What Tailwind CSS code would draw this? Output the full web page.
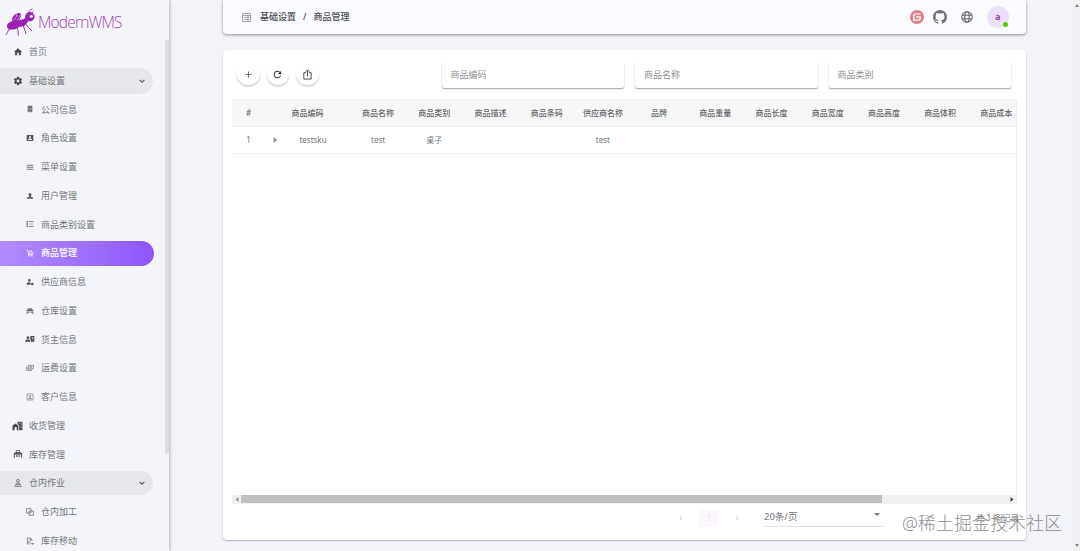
<!DOCTYPE html>
<html lang="zh-CN">
<head>
    <meta charset="UTF-8" />
    <meta name="viewport" content="width=device-width, initial-scale=1" />
    <title>ModernWMS</title>
    <script src="https://cdn.jsdelivr.net/npm/@tailwindcss/browser@4"></script>
</head>
<body class="relative flex w-[1080px] h-[551px] overflow-hidden bg-[#f3f4f9] font-['Noto_Sans','Noto_Sans_CJK_SC',sans-serif] text-[9px] text-[#75767b]">
    <!-- Sidebar -->
    <aside class="flex w-[169px] shrink-0 bg-[#f4f5fa] shadow-[1px_0_3px_rgba(0,0,0,0.25)]">
        <div class="w-[165px]">
            <div class="flex h-[37.5px] items-start pt-[7px] pl-[5px]">
                <svg class="h-[30px] w-[31px]" viewBox="0 0 31 30" fill="#9a22b2">
                    <path d="M2 19c0-3 4-5 8-5l5-1 4-1 3-3 1 6-4 4-5 1-3 2c-4 1-9 1-9-3z" />
                    <path d="M7.500 14.500C6 11 9 7.500 12 6.500s4 0 4 1.500-1 5-3 6-4 1-5.500.5z" />
                    <path d="M8.500 13c2-1.500 3-3 3.500-6M12 13c1.500-1 2.500-3 3-5" fill="none" stroke="#f4f5fa" stroke-width=".6" />
                    <circle cx="24.800" cy="9.800" r="4.700" />
                    <circle cx="26.300" cy="9.300" r="1.500" fill="#f4f5fa" />
                    <path d="M24 6c0-2 1-3.500 3.500-4M26.500 6l2-1.500M5 21 3 24l-2 4M12 20.500l1 3 .3 5M18 18l1.500 4 1.500 5M20.500 16.500l3 4 3.500 3.500" fill="none" stroke="#9a22b2" stroke-width=".9" />
                </svg>
                <svg class="h-[24px] w-[90px] overflow-visible" viewBox="0 0 90 24">
                    <text x="2" y="20.800" textLength="84.500" font-family="Open Sans, sans-serif" font-weight="300" font-size="15.500" fill="#a044b4">ModernWMS</text>
                </svg>
            </div>
            <nav>
                <a class="flex h-[28.75px] items-center pl-[13px]">
                    <svg class="mr-[6px] size-[10px]" viewBox="0 0 24 24" fill="#4a4b50"><path d="M10 20v-6h4v6h5v-8h3L12 3 2 12h3v8h5z" /></svg>
                    首页
                </a>
                <div class="flex h-[28.75px] items-center">
                    <a class="flex h-[26px] w-[153px] items-center rounded-r-full bg-[#e7e8eb] pl-[13px]">
                        <svg class="mr-[6px] size-[10px]" viewBox="0 0 24 24" fill="#4a4b50"><path d="M12 15.500A3.500 3.500 0 0 1 8.500 12 3.500 3.500 0 0 1 12 8.500a3.500 3.500 0 0 1 3.500 3.500 3.500 3.500 0 0 1-3.500 3.500m7.430-2.530c.04-.32.07-.64.07-.97s-.03-.66-.07-1l2.110-1.630c.19-.15.24-.42.12-.64l-2-3.460c-.12-.22-.39-.31-.61-.22l-2.490 1c-.52-.39-1.060-.73-1.690-.98l-.37-2.650A.506.506 0 0 0 14 2h-4c-.25 0-.46.18-.5.42l-.37 2.650c-.63.25-1.170.59-1.690.98l-2.490-1c-.22-.09-.49 0-.61.22l-2 3.460c-.13.22-.07.49.12.64L4.570 11c-.04.34-.07.67-.07 1s.03.65.07.97l-2.110 1.660c-.19.15-.25.42-.12.64l2 3.460c.12.22.39.3.61.22l2.490-1.010c.52.4 1.060.74 1.690.99l.37 2.650c.04.24.25.42.5.42h4c.25 0 .46-.18.5-.42l.37-2.650c.63-.26 1.170-.59 1.690-.99l2.490 1.010c.22.08.49 0 .61-.22l2-3.460c.12-.22.07-.49-.12-.64z" /></svg>
                        基础设置
                        <svg class="ml-auto mr-[6px] size-[10px]" viewBox="0 0 24 24" fill="#55565a"><path d="M7.410 8.580 12 13.170l4.590-4.590L18.500 10.500l-6.500 6.500-6.500-6.500z" /></svg>
                    </a>
                </div>
                <a class="flex h-[28.75px] items-center pl-[26px]">
                    <svg class="mr-[7px] size-[8px]" viewBox="0 0 24 24" fill="#66676b"><path d="M5 2v20h5v-3h4v3h5V2zm3 3h2v2H8zm6 0h2v2h-2zM8 9h2v2H8zm6 0h2v2h-2zm-6 4h2v2H8zm6 0h2v2h-2z" /></svg>
                    公司信息
                </a>
                <a class="flex h-[28.75px] items-center pl-[26px]">
                    <svg class="mr-[7px] size-[8px]" viewBox="0 0 24 24" fill="#55565a"><path d="M2 3v18h20V3zm10 3a3 3 0 1 1 0 6 3 3 0 0 1 0-6m6 12H6v-1.500c0-2 4-3 6-3s6 1 6 3z" /></svg>
                    角色设置
                </a>
                <a class="flex h-[28.75px] items-center pl-[26px]">
                    <svg class="mr-[7px] size-[8px]" viewBox="0 0 24 24" fill="#77787c"><path d="M2 5h20v3H2zm0 6h20v3H2zm0 6h20v3H2z" /></svg>
                    菜单设置
                </a>
                <a class="flex h-[28.75px] items-center pl-[26px]">
                    <svg class="mr-[7px] size-[8px]" viewBox="0 0 24 24" fill="#55565a"><path d="M12 3a4.500 4.500 0 0 1 4 6.500C15.300 11 14 12 14 14h1c3 .5 6 2 6 4v2H3v-2c0-2 3-3.500 6-4h1c0-2-1.300-3-2-4.500A4.500 4.500 0 0 1 12 3z" /></svg>
                    用户管理
                </a>
                <a class="flex h-[28.75px] items-center pl-[26px]">
                    <svg class="mr-[7px] size-[8px]" viewBox="0 0 24 24" fill="#66676b"><path d="M1 3h5v4H1zm8 1h14v2H9zM1 10h5v4H1zm8 1h14v2H9zM1 17h5v4H1zm8 1h14v2H9z" /></svg>
                    商品类别设置
                </a>
                <div class="flex h-[28.75px] items-center">
                    <a class="flex h-[25px] w-[154px] items-center rounded-r-full bg-linear-to-r from-[#b18cfd] to-[#8f55fd] pl-[26px] font-medium text-white">
                        <svg class="mr-[7px] size-[8px]" viewBox="0 0 24 24" fill="none" stroke="#fff" stroke-width="2.400"><path d="M1 3h4l4 12h10l3-7M10 4l8 7M18 4l-8 7M8 15l-1 3h13" /><circle cx="8" cy="21" r="1" /><circle cx="18" cy="21" r="1" /></svg>
                        商品管理
                    </a>
                </div>
                <a class="flex h-[28.75px] items-center pl-[26px]">
                    <svg class="mr-[7px] size-[8px]" viewBox="0 0 24 24" fill="#55565a"><path d="M10 3a4 4 0 1 1 0 8 4 4 0 0 1 0-8M2 20v-3c0-3 4-4 8-4l4 .5c-1 2-1 4 0 6.500z" /><circle cx="19" cy="18" r="4" /></svg>
                    供应商信息
                </a>
                <a class="flex h-[28.75px] items-center pl-[26px]">
                    <svg class="mr-[7px] size-[8px]" viewBox="0 0 24 24" fill="#66676b"><path d="M7 3h10v3l5 3v4H2V9l5-3zm2 2v2h6V5zM2 14h3v7H2zm17 0h3v7h-3zM7 14h2v4H7zm4 0h2v4h-2zm4 0h2v4h-2z" /></svg>
                    仓库设置
                </a>
                <a class="flex h-[28.75px] items-center pl-[26px]">
                    <svg class="mr-[7px] size-[8px] overflow-visible" viewBox="0 0 24 24" fill="#4a4b50"><circle cx="6" cy="8" r="4" /><path d="M-2 20v-3c0-5 15-5 15 0v3zM13 3h12v17H15v-4c0-1-1-2-2-3zm6 3v2h3V6zm0 4v2h3v-2zm0 4v2h3v-2z" /></svg>
                    货主信息
                </a>
                <a class="flex h-[28.75px] items-center pl-[26px]">
                    <svg class="mr-[7px] size-[8px]" viewBox="0 0 24 24" fill="none" stroke="#66676b" stroke-width="2.200"><path d="M7 4h16l-2 11H6zM2 8v11h16" /><circle cx="14" cy="9.500" r="2.500" /></svg>
                    运费设置
                </a>
                <a class="flex h-[28.75px] items-center pl-[26px]">
                    <svg class="mr-[7px] size-[8px]" viewBox="0 0 24 24" fill="none" stroke="#77787c" stroke-width="2"><path d="M3 3h18v18H3zM7 17c1-4 9-4 10 0z" /><circle cx="12" cy="9" r="2.500" /></svg>
                    客户信息
                </a>
                <a class="flex h-[28.75px] items-center pl-[12px]">
                    <svg class="mr-[6px] h-[10px] w-[11px]" viewBox="0 0 26 24" fill="#4a4b50"><path d="M1 11l7-5 7 5v11h-4v-7H6v7H1zM13 2h12v20h-8V10l-4-3zm4 2v2h2V4zm4 0v2h2V4zm0 5v2h2V9zm0 5v2h2v-2z" /></svg>
                    收货管理
                </a>
                <a class="flex h-[28.75px] items-center pl-[13px]">
                    <svg class="mr-[6px] size-[10px]" viewBox="0 0 24 24" fill="#55565a"><path d="M7 3h10v4l5 3v3H2v-3l5-3zm2 2v2h6V5zM2 13h2.500v8H2zm17.500 0H22v8h-2.500zM7 14h2v5H7zm4 0h2v5h-2zm4 0h2v5h-2z" /></svg>
                    库存管理
                </a>
                <div class="flex h-[28.75px] items-center">
                    <a class="flex h-[24px] w-[153px] items-center rounded-r-full bg-[#e7e8eb] pl-[13px]">
                        <svg class="mr-[6px] size-[10px]" viewBox="0 0 24 24" fill="none" stroke="#66676b" stroke-width="2"><circle cx="12" cy="7" r="3.500" /><path d="M6 16c1-5 11-5 12 0zM3 20h18" /></svg>
                        仓内作业
                        <svg class="ml-auto mr-[6px] size-[10px]" viewBox="0 0 24 24" fill="#55565a"><path d="M7.410 8.580 12 13.170l4.590-4.590L18.500 10.500l-6.500 6.500-6.500-6.500z" /></svg>
                    </a>
                </div>
                <a class="flex h-[28.75px] items-center pl-[26px]">
                    <svg class="mr-[7px] size-[8px]" viewBox="0 0 24 24" fill="none" stroke="#66676b" stroke-width="2.200"><path d="M2 2h13v13H2zM9 9h13v13H9z" /></svg>
                    仓内加工
                </a>
                <a class="flex h-[28.75px] items-center pl-[26px]">
                    <svg class="mr-[7px] size-[8px]" viewBox="0 0 24 24" fill="none" stroke="#66676b" stroke-width="2.200"><path d="M10 21H4V3h9l5 5v4M13 3v6h5M7 13h6M7 17h4M13 20h9M19 17l3 3-3 3" /></svg>
                    库存移动
                </a>
            </nav>
        </div>
        <div class="mt-[40px] h-[414px] w-[4px] rounded-b-full bg-[#dddee2]"></div>
    </aside>

    <!-- Content -->
    <main class="ml-[54px] w-[803px] shrink-0">
        <header class="flex h-[34px] items-center rounded-b-[4px] bg-[#fafbfe] pl-[19px] pr-[17px] text-[#4a4b4f] shadow-[0_1px_3px_rgba(0,0,0,0.42)]">
            <svg class="mr-[9px] size-[9px]" viewBox="0 0 18 18" fill="none" stroke="#999" stroke-width="1.800"><path d="M1 1h16v16H1zM1 5h16M4 9h10M4 13h10M12 6v10" /></svg>
            <span class="font-medium">基础设置</span>
            <span class="mx-[7px] font-medium">/</span>
            <span class="font-medium">商品管理</span>
            <div class="ml-auto flex items-center">
                <svg class="size-[14px]" viewBox="0 0 24 24"><circle cx="12" cy="12" r="12" fill="#e07f88" /><path d="M18 6.500H10A3.500 3.500 0 0 0 6.500 10v7.500H15A2.500 2.500 0 0 0 17.500 15v-3H11" fill="none" stroke="#fff" stroke-width="2.200" /></svg>
                <svg class="ml-[9px] size-[14px]" viewBox="0 0 16 16" fill="#747477"><path d="M8 0C3.580 0 0 3.580 0 8c0 3.540 2.290 6.530 5.470 7.590.4.07.55-.17.55-.38 0-.19-.01-.82-.01-1.490-2.010.37-2.530-.49-2.690-.94-.09-.23-.48-.94-.82-1.130-.28-.15-.68-.52-.01-.53.63-.01 1.080.58 1.230.82.72 1.210 1.870.87 2.330.66.07-.52.28-.87.51-1.070-1.780-.2-3.640-.89-3.640-3.950 0-.87.31-1.590.82-2.150-.08-.2-.36-1.020.08-2.120 0 0 .67-.21 2.200.82.64-.18 1.320-.27 2-.27s1.360.09 2 .27c1.530-1.040 2.200-.82 2.200-.82.44 1.100.16 1.920.08 2.120.51.56.82 1.270.82 2.150 0 3.070-1.870 3.750-3.650 3.950.29.25.54.73.54 1.480 0 1.070-.01 1.930-.01 2.200 0 .21.15.46.55.38A8.010 8.010 0 0 0 16 8c0-4.420-3.580-8-8-8z" /></svg>
                <svg class="ml-[14px] size-[12px]" viewBox="0 0 24 24" fill="none" stroke="#666" stroke-width="2.200"><circle cx="12" cy="12" r="10.500" /><ellipse cx="12" cy="12" rx="4.500" ry="10.500" /><path d="M2 8.500h20M2 15.500h20" /></svg>
                <div class="relative ml-[14px] flex size-[22.500px] items-center justify-center rounded-full bg-[#eae0fa] text-[9px] font-bold text-[#9c3bb5]">
                    a
                    <span class="absolute right-[1px] bottom-[1px] size-[5px] rounded-full bg-[#56ca00]"></span>
                </div>
            </div>
        </header>

        <section class="mt-[16px] h-[490px] rounded-[4px] bg-white px-[9px] pt-[11px] shadow-[0_1px_2px_rgba(0,0,0,0.28)]">
            <div class="flex h-[27px] items-center">
                <div class="flex gap-[7px] pb-[1px] pl-[5px]">
                    <button class="flex size-[22.500px] items-center justify-center rounded-full bg-white shadow-[0_1.500px_2px_rgba(0,0,0,0.2)]">
                        <svg class="size-[9px]" viewBox="0 0 24 24" fill="#444"><path d="M20 13h-7v7h-2v-7H4v-2h7V4h2v7h7z" /></svg>
                    </button>
                    <button class="flex size-[22.500px] items-center justify-center rounded-full bg-white shadow-[0_1.500px_2px_rgba(0,0,0,0.2)]">
                        <svg class="size-[11px]" viewBox="0 0 24 24" fill="#333"><path d="M17.650 6.350A7.958 7.958 0 0 0 12 4a8 8 0 0 0-8 8 8 8 0 0 0 8 8c3.730 0 6.840-2.550 7.730-6h-2.080A5.990 5.990 0 0 1 12 18a6 6 0 0 1-6-6 6 6 0 0 1 6-6c1.660 0 3.140.69 4.220 1.780L13 11h7V4z" /></svg>
                    </button>
                    <button class="flex size-[22.500px] items-center justify-center rounded-full bg-white shadow-[0_1.500px_2px_rgba(0,0,0,0.2)]">
                        <svg class="size-[11px]" viewBox="0 0 24 24" fill="none" stroke="#444" stroke-width="2"><path d="M9 8H4v14h16V8h-5M12 16V3M8 6l4-4 4 4" /></svg>
                    </button>
                </div>
                <div class="ml-auto mr-[6px] flex gap-[11px] text-[#8f8f8f]">
                    <div class="flex h-[27px] w-[182.500px] items-center rounded-[2px] bg-white pl-[9px] shadow-[0_1px_1.500px_rgba(0,0,0,0.36)]">商品编码</div>
                    <div class="flex h-[27px] w-[182.500px] items-center rounded-[2px] bg-white pl-[9px] shadow-[0_1px_1.500px_rgba(0,0,0,0.36)]">商品名称</div>
                    <div class="flex h-[27px] w-[182.500px] items-center rounded-[2px] bg-white pl-[9px] shadow-[0_1px_1.500px_rgba(0,0,0,0.36)]">商品类别</div>
                </div>
            </div>

            <!-- Goods table -->
            <div class="mt-[11px] flex h-[405px] w-[785px] flex-col overflow-hidden border-r border-[#eeeeee] text-[8px]">
                <table class="w-[792.500px] table-fixed text-center">
                    <colgroup>
                        <col class="w-[33px]" /><col class="w-[85px]" />
                        <col span="12" />
                    </colgroup>
                    <thead class="bg-[#f7f7f7] text-[#66676b]">
                        <tr class="h-[27px] border-y border-[#efefef]">
                            <th class="font-medium">#</th>
                            <th class="font-medium">商品编码</th>
                            <th class="font-medium">商品名称</th>
                            <th class="font-medium">商品类别</th>
                            <th class="font-medium">商品描述</th>
                            <th class="font-medium">商品条码</th>
                            <th class="font-medium">供应商名称</th>
                            <th class="font-medium">品牌</th>
                            <th class="font-medium">商品重量</th>
                            <th class="font-medium">商品长度</th>
                            <th class="font-medium">商品宽度</th>
                            <th class="font-medium">商品高度</th>
                            <th class="font-medium">商品体积</th>
                            <th class="font-medium">商品成本</th>
                        </tr>
                    </thead>
                    <tbody>
                        <tr class="h-[27px] border-b border-[#efefef]">
                            <td>1</td>
                            <td>
                                <div class="flex items-center pl-[8px]">
                                    <svg class="h-[6px] w-[5px]" viewBox="0 0 5 6" fill="#999"><path d="M.5 0 4.500 3 .5 6z" /></svg>
                                    <span class="w-[70px]">testsku</span>
                                </div>
                            </td>
                            <td>test</td>
                            <td>桌子</td>
                            <td></td>
                            <td></td>
                            <td>test</td>
                            <td></td>
                            <td></td>
                            <td></td>
                            <td></td>
                            <td></td>
                            <td></td>
                            <td></td>
                        </tr>
                    </tbody>
                </table>
                <div class="mt-auto flex h-[9px] items-center bg-[#f1f1f1]">
                    <svg class="mx-[2.500px] h-[5px] w-[4px]" viewBox="0 0 4 5" fill="#999"><path d="M3.500 0v5L.5 2.500z" /></svg>
                    <div class="mb-px h-[8px] w-[641px] bg-[#c1c1c1]"></div>
                    <svg class="ml-auto mr-[2px] h-[5px] w-[4px]" viewBox="0 0 4 5" fill="#444"><path d="M.5 0v5l3-2.500z" /></svg>
                </div>
            </div>

            <!-- Pager -->
            <div class="flex h-[28px] items-center">
                <svg class="ml-[446px] size-[6px]" viewBox="0 0 6 6" fill="none" stroke="#bbb" stroke-width=".8"><path d="M4 .5 2 3l2 2.500" /></svg>
                <span class="ml-[15px] flex h-[17px] w-[20px] items-center justify-center rounded-[2px] bg-[#fcf7fc] text-[#f0ddf3]">1</span>
                <svg class="ml-[15px] size-[6px]" viewBox="0 0 6 6" fill="none" stroke="#bbb" stroke-width=".8"><path d="m2 .5 2 2.500-2 2.500" /></svg>
                <div class="ml-[24px] flex h-[17px] w-[120px] items-center justify-between border-b border-[#e2e2e2] text-[9.500px]">
                    <span>20条/页</span>
                    <svg class="mr-[4px] mb-[6px] h-[3px] w-[6px]" viewBox="0 0 6 3" fill="#777"><path d="M0 0h6L3 3z" /></svg>
                </div>
                <span class="ml-auto -mr-[2px] text-[8.500px] whitespace-nowrap">共 1 条记录</span>
            </div>
        </section>
    </main>

    <!-- Page scrollbar -->
    <div class="ml-auto flex w-[7px] flex-col items-center justify-between bg-[#f1f1f3] py-[4px]">
        <svg class="h-[3px] w-[4px]" viewBox="0 0 4 3" fill="#888"><path d="M0 3h4L2 0z" /></svg>
        <svg class="h-[3px] w-[4px]" viewBox="0 0 4 3" fill="#888"><path d="M0 0h4L2 3z" /></svg>
    </div>

    <!-- Watermark -->
    <svg class="absolute left-[900px] top-[508px] h-[32px] w-[166px]" viewBox="0 0 166 32" font-family="Noto Sans, Noto Sans CJK SC, sans-serif" font-size="17.800" font-weight="300">
        <text x="2" y="22" textLength="160" fill="#8e8e91">@稀土掘金技术社区</text>
    </svg>
</body>
</html>
